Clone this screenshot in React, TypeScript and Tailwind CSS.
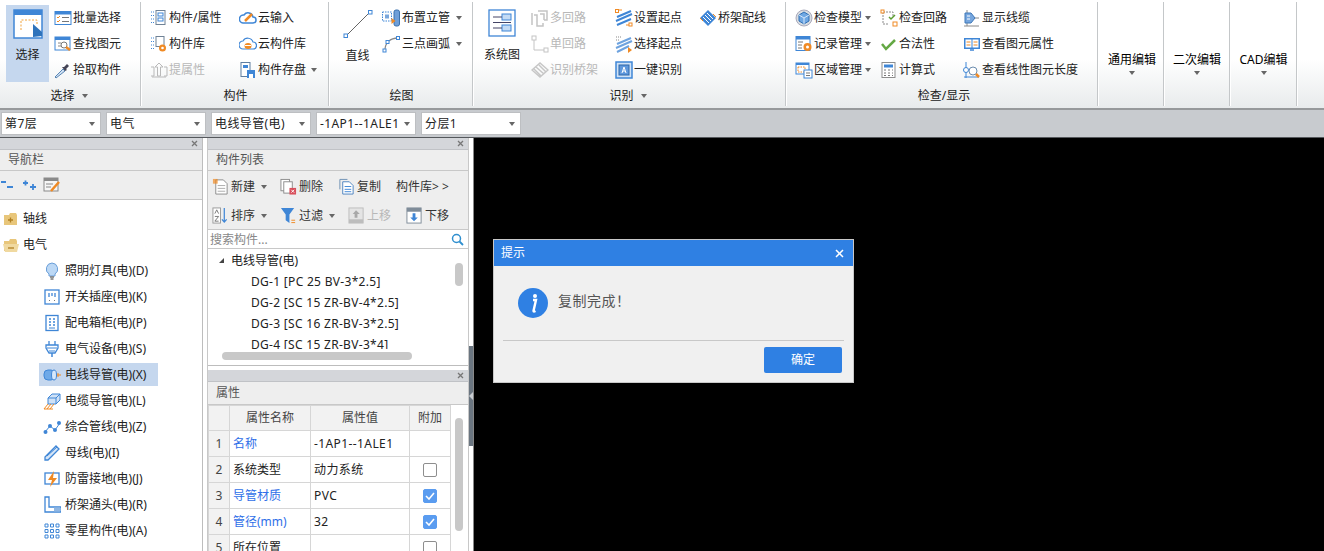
import React from "react";

const B = "#3f86d6";
const O = "#f08a24";
const G = "#b9b9b9";
const LB = "#c3dbf5";

const icons: Record<string, React.ReactNode> = {
  batch: (<><rect x="1" y="2.500" width="16" height="13" fill="#fff" stroke={B} /><rect x="1" y="2.500" width="16" height="3" fill={B} /><path d="M3 8l1 1 2-2M3 12l1 1 2-2" stroke={O} fill="none" /><path d="M8 8.500h7M8 12.500h7" stroke="#777" /></>),
  find: (<><rect x="1" y="2" width="15" height="13" fill="#fff" stroke={B} /><rect x="1" y="2" width="15" height="3" fill={B} /><circle cx="10" cy="10" r="3" fill="none" stroke="#777" /><path d="M4 8h3M4 11h3" stroke="#888" /><path d="M12 12l4 3" stroke={O} strokeWidth="2.500" /></>),
  pick: (<><path d="M2 17l-1-1 8-8 2 2z" fill="#cfe0f3" stroke="#5a87b5" /><path d="M10 6l3-3 2 2-3 3 1 1-2 1-3-4z" fill="#445" /></>),
  prop: (<><path d="M1 3h3M1 6.500h3M1 10h3M1 13.500h3" stroke={B} strokeDasharray="1 1" /><rect x="6" y="1.500" width="9" height="14" fill="#fff" stroke="#6f8296" /><rect x="8" y="4" width="5" height="3" fill="none" stroke={B} /><rect x="8" y="9" width="5" height="3" fill="none" stroke={B} /></>),
  cloudIn: (<><path d="M4 14a4 4 0 0 1 1-8 5 5 0 0 1 9 2 3 3 0 0 1 0 6z" fill="none" stroke={B} strokeWidth="1.500" /><path d="M6 12l7-7" stroke={O} strokeWidth="2.500" /></>),
  lib: (<><path d="M1 3h3M1 6.500h3M1 10h3M1 13.500h3" stroke={B} strokeDasharray="1 1" /><rect x="6" y="1.500" width="8" height="10" fill="#fff" stroke="#6f8296" /><circle cx="12.500" cy="13" r="3.500" fill={O} /><circle cx="12.500" cy="13" r="1.300" fill="#fff" /></>),
  cloudLib: (<><path d="M4 14a4 4 0 0 1 0-8 5.500 5.500 0 0 1 10 1 3.500 3.500 0 0 1 0 7z" fill="#fff" stroke={B} strokeWidth="1.200" /><ellipse cx="9" cy="11" rx="3.500" ry="3" fill={O} /><path d="M6 10.500h6" stroke="#fff" /></>),
  liftOff: (<><path d="M9 2l4 4h-2.500v9h-3V6H5z" fill="none" stroke={G} /><path d="M1 6h3v9H1M14 6h3v9h-3M2 16h14" stroke={G} fill="none" /></>),
  save: (<><rect x="2" y="1.500" width="9" height="14" fill="#fff" stroke="#5f7ea0" /><rect x="4" y="4" width="5" height="3" fill={B} /><rect x="8" y="9" width="8" height="8" fill={B} /><rect x="10" y="13" width="4" height="4" fill="#fff" /></>),
  riser: (<><rect x="0.500" y="3" width="9" height="9" fill="#fff" stroke={B} strokeDasharray="1.500 1" /><rect x="3" y="5.500" width="4" height="4" fill="#7aa7dc" /><rect x="12" y="1" width="5.500" height="16" rx="2" fill="#6d9ed8" stroke="#3b71ad" /><path d="M9.500 9l4 3-4 3z" fill={O} /></>),
  arc: (<><path d="M3 15C3 8 8 3 16 3" fill="none" stroke="#888" strokeWidth="1.300" /><rect x="1" y="14" width="3" height="3" fill="#fff" stroke={B} /><rect x="4" y="5.500" width="3" height="3" fill="#fff" stroke={B} /><rect x="14.500" y="1.500" width="3" height="3" fill="#fff" stroke={B} /></>),
  multi: (<path d="M7 2h9v9h-3M3 6h3v11h6v-3M9 5h4v6M1 4v12" fill="none" stroke="#c4c4c4" strokeWidth="1.500" />),
  single: (<><path d="M3 4v11h12" fill="none" stroke="#c4c4c4" /><rect x="1" y="1" width="4" height="4" fill="#fff" stroke="#c4c4c4" /><rect x="13" y="13" width="4" height="4" fill="#fff" stroke="#c4c4c4" /></>),
  tray: (<path d="M1 9l8-7 8 7-8 7zM5 6l8 7M8 4l7 7M3 8l7 7" fill="none" stroke="#c6c6c6" strokeWidth="1.500" />),
  setStart: (<><path d="M2 8L16 2M1 12L17 5M2 16L16 10" stroke={B} strokeWidth="2" /><rect x="0.500" y="0.500" width="3" height="3" fill="none" stroke={O} /><rect x="14" y="14" width="3" height="3" fill="none" stroke={O} /><path d="M4 1h3M11 16h3" stroke={O} /></>),
  chooseStart: (<><path d="M2 9L16 3M1 13L17 6M2 17L14 11" stroke="#6ea3df" strokeWidth="2" /><path d="M1 2h5M1 5h3" stroke="#888" strokeDasharray="1 1" /><path d="M13 12l4 3-4 3z" fill={O} /></>),
  oneKey: (<><rect x="1" y="1" width="16" height="16" fill="#cfe2f7" stroke={B} strokeWidth="1.500" /><rect x="4" y="4" width="10" height="10" fill="#5f98dc" stroke="#2f66a8" /><path d="M7 12l2-6 2 6M8 10h2" stroke="#fff" fill="none" /></>),
  trayWire: (<><path d="M1 9l8-8 8 8-8 8z" fill={B} /><path d="M4 8l6 6M6 6l6 6M8 4l6 6" stroke="#fff" /><path d="M1 9l3 3M14 5l3 3" stroke={O} /></>),
  model: (<><circle cx="9" cy="9" r="8" fill="#d8dde2" stroke="#aab" /><path d="M9 3l5 3v6l-5 3-5-3V6z" fill="#6ea7e3" stroke="#2f6fb5" /><path d="M4 6l5 3 5-3M9 9v6" stroke="#d4e6fa" fill="none" /></>),
  record: (<><rect x="1" y="1.500" width="14" height="14" fill="#fff" stroke={B} /><rect x="1" y="1.500" width="14" height="3" fill={B} /><path d="M3 7h5M3 10h4M3 13h4" stroke="#777" /><circle cx="12.500" cy="12" r="4" fill={O} /><circle cx="12.500" cy="12" r="1.500" fill="#fff" /></>),
  area: (<><rect x="1" y="2" width="13" height="11" fill="#fff" stroke={B} /><rect x="1" y="2" width="13" height="2" fill={B} /><rect x="3" y="6" width="7" height="5" fill="none" stroke={O} strokeDasharray="1.500 1" /><rect x="9" y="9" width="8" height="8" fill="#fff" stroke={B} /><path d="M11 12h4M11 14.500h4" stroke="#777" /></>),
  loop: (<><path d="M3 3h10v4M3 3v12h6" fill="none" stroke="#8a8a8a" strokeDasharray="2 1" /><rect x="1" y="1" width="3" height="3" fill="#fff" stroke={O} /><rect x="13" y="13" width="4" height="4" fill="#fff" stroke={O} /><path d="M9 8l2 2 4-4" fill="none" stroke="#5c9e31" strokeWidth="1.500" /></>),
  check: (<path d="M2 9l4 5 9-9" fill="none" stroke="#64a844" strokeWidth="2.500" />),
  calc: (<><rect x="2" y="1.500" width="13" height="15" fill="#fff" stroke="#8d8d8d" /><rect x="4" y="3.500" width="9" height="3" fill={B} /><path d="M4 9h2M8 9h2M12 9h1M4 12h2M8 12h2M12 12h1M4 14.500h2M8 14.500h2M12 14.500h1" stroke="#777" /></>),
  showWire: (<><path d="M4 1v16M1 17h15M11 9h5" stroke="#8a8a8a" /><path d="M2 4h6l4 5-4 5H2z" fill="#76a6de" stroke="#3f78b8" /><path d="M4 7h3M4 10h3" stroke="#fff" /></>),
  book: (<><path d="M1 3h16v11H1z" fill={B} /><rect x="2.500" y="4.500" width="6" height="8" fill="#fff" /><rect x="9.500" y="4.500" width="6" height="8" fill="#fff" /><path d="M3.500 7h4M3.500 10h4M10.500 7h4M10.500 10h4" stroke={O} /><path d="M7 15h4" stroke={B} strokeWidth="1.500" /></>),
  length: (<><path d="M3 1v16M1 16h15" stroke={B} /><circle cx="3" cy="9" r="2.500" fill="#fff" stroke={B} /><circle cx="10" cy="10" r="4" fill="#fff" stroke="#6b8cae" /><path d="M13 13l3 3" stroke={O} strokeWidth="2.500" /></>),
  bulb: (<><path d="M9 1a6 6 0 0 1 3 11v2H6v-2A6 6 0 0 1 9 1z" fill="#bcd8f5" stroke="#6a9ed8" /><path d="M7 15h4M7.500 17h3" stroke="#777" strokeWidth="1.300" /></>),
  socket: (<><rect x="2" y="2" width="14" height="14" fill="#fff" stroke={B} strokeWidth="1.300" /><path d="M6 5v4M9 5v3M12 5v4" stroke={B} strokeWidth="1.300" /><path d="M6 12l1 1M12 12l-1 1" stroke="#777" /></>),
  box: (<><rect x="3" y="1.500" width="12" height="15" fill="#fff" stroke={B} strokeWidth="1.300" /><path d="M6 5h2M10 5h2M6 8h2M10 8h2M6 11h2M10 11h2" stroke={B} strokeWidth="1.500" /><path d="M6 14h6" stroke={B} /></>),
  device: (<><path d="M6 1v4M12 1v4" stroke={B} strokeWidth="1.300" /><path d="M3 5h12v3l-3 5H6L3 8z" fill="#fff" stroke={B} strokeWidth="1.300" /><path d="M4 8h10M6 11h6" stroke={B} /><path d="M9 13v4" stroke={B} strokeWidth="1.500" /></>),
  conduit: (<><rect x="1" y="4" width="11" height="10" rx="4" fill="#6ea9e8" stroke={B} /><ellipse cx="11" cy="9" rx="2.500" ry="5" fill="#d6e8fb" stroke={B} /><path d="M14 9h4M15 7v4" stroke={O} /></>),
  cable: (<><path d="M5 6l4-4h8v6l-4 4H5z" fill="#cfe1f6" stroke={B} /><path d="M5 6h8v6M13 6l4-4" stroke={B} fill="none" /><path d="M1 17l4-5M4 17l4-5M7 17l4-5M1 17h9" stroke={O} fill="none" /></>),
  pipe: (<><path d="M2 14l5-6 5 4 5-7" fill="none" stroke={B} /><circle cx="2.500" cy="14" r="2" fill={B} /><circle cx="7" cy="8" r="2" fill={B} /><circle cx="12" cy="12" r="2" fill={B} /><circle cx="16" cy="5" r="2" fill={B} /></>),
  bus: (<><path d="M2 13L13 2l3 3L5 16H2z" fill="#d5e5f7" stroke={B} strokeWidth="1.300" /><path d="M4 12L14 3" stroke={B} /></>),
  ground: (<><rect x="2" y="3" width="14" height="11" fill="#fff" stroke={B} strokeWidth="1.300" /><path d="M11 1L5 10h4l-2 7 7-9h-4z" fill={O} /></>),
  tee: (<><path d="M2 1h4v10h12v5H2z" fill="#fff" stroke={B} strokeWidth="1.300" /><rect x="11" y="11.500" width="6" height="4" fill="#8fb6e2" /></>),
  grid: (<path d="M2 2h3v3H2zM7.500 2h3v3h-3zM13 2h3v3h-3zM2 7.500h3v3H2zM7.500 7.500h3v3h-3zM13 7.500h3v3h-3zM2 13h3v3H2zM7.500 13h3v3h-3zM13 13h3v3h-3z" fill="none" stroke={B} />),
  newItem: (<><path d="M4 2h8l4 4v11H4z" fill="#fff" stroke="#8b8b8b" /><path d="M6 8h8M6 11h8M6 14h8" stroke="#aaa" /><rect x="1" y="1" width="5" height="5" fill={O} fillOpacity="0.700" /></>),
  del: (<><rect x="1" y="1.500" width="9" height="12" fill="#fff" stroke="#8b8b8b" /><rect x="4" y="4" width="9" height="12" fill="#fff" stroke="#8b8b8b" /><rect x="10" y="10.500" width="7" height="7" fill="#d8505c" /><path d="M12 12.500l3 3M15 12.500l-3 3" stroke="#fff" /></>),
  copy: (<><path d="M2 12V1.500h8" fill="none" stroke="#6c8fb4" /><path d="M5 4h7l4 4v9H5z" fill="#fff" stroke="#4d83bf" /><path d="M7 9h7M7 12h7M7 14.500h7" stroke={B} /></>),
  sort: (<><rect x="1" y="1" width="8" height="16" fill="#fff" stroke="#999" /><path d="M3 7l2-4 2 4M3 10h4l-4 5h4" stroke="#777" fill="none" /><path d="M13 1v15M10.500 13l2.500 3 2.500-3" stroke={B} fill="none" strokeWidth="1.300" /></>),
  filter: (<><path d="M1 1h14L10 8v9L6 14V8z" fill={B} /><path d="M12 14h4M12 16.500h4" stroke={O} /></>),
  up: (<><rect x="1" y="1" width="15" height="16" fill="#e4e4e4" stroke="#bdbdbd" /><path d="M8.500 3.500l4 4h-2.500v4h-3v-4H5z" fill="#a8a8a8" /><rect x="1" y="13" width="15" height="4" fill="#bdbdbd" /></>),
  down: (<><rect x="1" y="1" width="15" height="16" fill="#fff" stroke="#7f8c99" /><rect x="1" y="1" width="15" height="4" fill="#7f8c99" /><path d="M8.500 15l4-4H10V6.500H7V11H4.500z" fill={B} /></>),
  edit: (<><rect x="1" y="2" width="14" height="13" fill="#f6f6f6" stroke="#8a8a8a" /><rect x="1" y="2" width="14" height="3" fill="#8a8a8a" /><path d="M3 8h7M3 11h5" stroke="#888" /><path d="M8 15l8-9" stroke={O} strokeWidth="2.500" /></>),
};

function Ic({ n, size = 18 }: { n: string; size?: number }) {
  return <svg width={size} height={size} viewBox="0 0 18 18" className="shrink-0">{icons[n]}</svg>;
}

function Caret({ className = "" }: { className?: string }) {
  return <span className={`inline-block w-0 h-0 border-x-[3.5px] border-x-transparent border-t-[4px] border-t-[#666] ${className}`} />;
}

type Tool = { icon: string; label: string; off?: boolean; caret?: number };

function ToolCol({ w, items, gap = 2 }: { w: number; items: Tool[]; gap?: number }) {
  return (
    <div className="flex flex-col shrink-0" style={{ width: w }}>
      {items.map((t) => (
        <div key={t.label} className="flex items-center h-[26px] whitespace-nowrap" style={{ gap }}>
          <Ic n={t.icon} />
          <span className={t.off ? "text-[#b8b8b8]" : "text-[#222]"}>{t.label}</span>
          {t.caret !== undefined && <span className="flex" style={{ marginLeft: t.caret }}><Caret /></span>}
        </div>
      ))}
    </div>
  );
}

function Group({ w, label, caret, children, labelClass = "pl-[2px]" }: { w: number; label: string; caret?: boolean; children: React.ReactNode; labelClass?: string }) {
  return (
    <div className="flex flex-col shrink-0 h-[104px] border-r border-[#c4c7c9] shadow-[1px_0_0_#fff]" style={{ width: w }}>
      <div className="flex h-[85px]">{children}</div>
      <div className={`flex items-center justify-center gap-[7px] text-[#222] ${labelClass}`}>
        {label}
        {caret && <Caret />}
      </div>
    </div>
  );
}

function EditGroup({ w, label, cls }: { w: number; label: string; cls: string }) {
  return (
    <div className={`flex flex-col items-center pt-[49px] h-[104px] shrink-0 border-r border-[#c4c7c9] shadow-[1px_0_0_#fff] ${cls}`} style={{ width: w }}>
      <span className="leading-[18px]">{label}</span>
      <Caret className="mt-[2px]" />
    </div>
  );
}

function Ribbon() {
  return (
    <div className="flex h-[110px] pt-[2px] border-b-2 border-[#96999b] bg-gradient-to-b from-white from-[55%] to-[#e8ebec]">
      <Group w={141} label="选择" caret labelClass="pr-[2px]">
        <div className="flex flex-col items-center ml-[6px] mt-[3px] w-[43px] h-[77px] bg-[#c5d7ee] pt-[4px]">
          <svg width="30" height="30" viewBox="0 0 30 30"><rect x="1" y="1" width="28" height="28" fill="#fff" stroke={B} strokeWidth="1.500" /><rect x="1" y="1" width="28" height="5" fill={B} /><path d="M8 21V11h16v5" fill="none" stroke="#f2a33a" strokeDasharray="2 1.500" /><path d="M20 15v13l9-1v-4z" fill="#2f73bb" /></svg>
          <span className="mt-[7px] text-[#222]">选择</span>
        </div>
        <div className="ml-[5px] mt-[3px]">
          <ToolCol w={86} gap={1} items={[{ icon: "batch", label: "批量选择" }, { icon: "find", label: "查找图元" }, { icon: "pick", label: "拾取构件" }]} />
        </div>
      </Group>
      <Group w={188} label="构件">
        <div className="flex pl-[9px] mt-[3px]">
          <ToolCol w={89} gap={1} items={[{ icon: "prop", label: "构件/属性" }, { icon: "lib", label: "构件库" }, { icon: "liftOff", label: "提属性", off: true }]} />
          <ToolCol w={88} gap={1} items={[{ icon: "cloudIn", label: "云输入" }, { icon: "cloudLib", label: "云构件库" }, { icon: "save", label: "构件存盘", caret: 4 }]} />
        </div>
      </Group>
      <Group w={144} label="绘图">
        <div className="flex flex-col items-center w-[53px] pl-[4px] pt-[7px]">
          <svg width="30" height="30" viewBox="0 0 30 30"><path d="M3 27L27 3" stroke="#666" /><rect x="1" y="25" width="3.500" height="3.500" fill="#fff" stroke={B} /><rect x="25.500" y="1.500" width="3.500" height="3.500" fill="#fff" stroke={B} /></svg>
          <span className="mt-[8px] text-[#222]">直线</span>
        </div>
        <div className="mt-[3px]">
          <ToolCol w={90} gap={2} items={[{ icon: "riser", label: "布置立管", caret: 4 }, { icon: "arc", label: "三点画弧", caret: 4 }]} />
        </div>
      </Group>
      <Group w={313} label="识别" caret labelClass="pr-[2px]">
        <div className="flex flex-col items-center w-[58px] pt-[7px]">
          <svg width="28" height="28" viewBox="0 0 28 28"><rect x="1" y="1" width="26" height="26" fill="#fff" stroke={B} strokeWidth="1.300" /><rect x="14" y="5" width="9" height="6" fill={LB} stroke={B} /><rect x="14" y="16" width="9" height="6" fill={LB} stroke={B} /><path d="M5 8h9M5 19h9M5 13.500h18" stroke="#446" /></svg>
          <span className="mt-[9px] text-[#222]">系统图</span>
        </div>
        <div className="flex mt-[3px]">
          <ToolCol w={84} gap={1} items={[{ icon: "multi", label: "多回路", off: true }, { icon: "single", label: "单回路", off: true }, { icon: "tray", label: "识别桥架", off: true }]} />
          <ToolCol w={84} gap={1} items={[{ icon: "setStart", label: "设置起点" }, { icon: "chooseStart", label: "选择起点" }, { icon: "oneKey", label: "一键识别" }]} />
          <ToolCol w={80} gap={1} items={[{ icon: "trayWire", label: "桥架配线" }]} />
        </div>
      </Group>
      <Group w={312} label="检查/显示" labelClass="pl-[5px]">
        <div className="flex pl-[9px] mt-[3px]">
          <ToolCol w={85} gap={1} items={[{ icon: "model", label: "检查模型", caret: 2 }, { icon: "record", label: "记录管理", caret: 2 }, { icon: "area", label: "区域管理", caret: 2 }]} />
          <ToolCol w={83} gap={1} items={[{ icon: "loop", label: "检查回路" }, { icon: "check", label: "合法性" }, { icon: "calc", label: "计算式" }]} />
          <ToolCol w={120} gap={1} items={[{ icon: "showWire", label: "显示线缆" }, { icon: "book", label: "查看图元属性" }, { icon: "length", label: "查看线性图元长度" }]} />
        </div>
      </Group>
      <EditGroup w={66} label="通用编辑" cls="pl-[3px]" />
      <EditGroup w={66} label="二次编辑" cls="pl-[1px]" />
      <EditGroup w={67} label="CAD编辑" cls="pl-[1px]" />
    </div>
  );
}

function Combo({ text }: { text: string }) {
  return (
    <div className="flex items-center justify-between w-[100px] h-[23px] pl-[3px] pr-[5px] bg-white border border-[#bdbfc2] text-[#222] tracking-[0.4px]">
      {text}
      <Caret />
    </div>
  );
}

function PanelHead({ title, h = 21 }: { title: string; h?: number }) {
  return (
    <>
      <div className="flex shrink-0 items-center justify-end h-[12px] pr-[4px] bg-[#d4d6da] border-b border-[#c0c2c6]">
        <svg width="7" height="7" viewBox="0 0 7 7"><path d="M1 1l5 5M6 1L1 6" stroke="#777" strokeWidth="1.300" /></svg>
      </div>
      <div className="flex shrink-0 items-center pl-[8px] bg-[#eeeeee] border-b border-[#c8c8c8] text-[#555]" style={{ height: h }}>{title}</div>
    </>
  );
}

const navItems = [
  ["bulb", "照明灯具(电)(D)"],
  ["socket", "开关插座(电)(K)"],
  ["box", "配电箱柜(电)(P)"],
  ["device", "电气设备(电)(S)"],
  ["conduit", "电线导管(电)(X)"],
  ["cable", "电缆导管(电)(L)"],
  ["pipe", "综合管线(电)(Z)"],
  ["bus", "母线(电)(I)"],
  ["ground", "防雷接地(电)(J)"],
  ["tee", "桥架通头(电)(R)"],
  ["grid", "零星构件(电)(A)"],
];

function Folder({ open, mark }: { open?: boolean; mark: string }) {
  return (
    <svg width="17" height="15" viewBox="0 0 17 15" className="shrink-0">
      <path d="M1 3h5l1-2h6l1 2v10H1z" fill="#e8c67a" />
      {open && <path d="M0 6h16l-2 8H2z" fill="#f0d9a0" />}
      <path d={mark} stroke="#b07f22" strokeWidth="1.300" />
    </svg>
  );
}

function NavPanel() {
  return (
    <div className="flex flex-col w-[203px] shrink-0 border-r border-[#bdbdbd] bg-white overflow-hidden">
      <PanelHead title="导航栏" />
      <div className="flex shrink-0 items-center gap-[7px] h-[29px] bg-[#eeeeee] border-b border-[#c8c8c8]">
        <svg width="14" height="10" viewBox="0 0 14 10"><path d="M1 2h5M7 7h6" stroke={B} strokeWidth="2" /></svg>
        <svg width="14" height="10" viewBox="0 0 14 10" className="ml-[1px]"><path d="M1 3h5M3.500 .5v5M8 7h6M11 4v6" stroke={B} strokeWidth="1.800" /></svg>
        <Ic n="edit" />
      </div>
      <div className="pt-[6px]">
        <div className="flex items-center gap-[3px] h-[26px] pl-[3px]"><Folder mark="M5 8h5M7.500 5.500v5" /><span className="text-[#222]">轴线</span></div>
        <div className="flex items-center gap-[3px] h-[26px] pl-[3px]"><Folder open mark="M5 10h6" /><span className="text-[#222]">电气</span></div>
        {navItems.map(([icon, label]) => (
          <div key={label} className={`flex items-center h-[26px] ml-[39px] w-[119px] ${label.includes("(X)") ? "bg-[linear-gradient(#c5d7ee,#c5d7ee)] bg-no-repeat bg-[length:100%_23px] bg-[position:0_1px]" : ""}`}>
            <span className="flex items-center gap-[4px] pl-[4px] whitespace-nowrap text-[#222]"><Ic n={icon} />{label}</span>
          </div>
        ))}
        <div className="flex items-center gap-[4px] h-[26px] pl-[10px]"><Folder mark="M5 8h5M7.500 5.500v5" /></div>
      </div>
    </div>
  );
}

function ListTool({ icon, label, off, caret, cls = "" }: { icon: string; label: string; off?: boolean; caret?: boolean; cls?: string }) {
  return (
    <div className={`flex items-center gap-[2px] whitespace-nowrap ${off ? "text-[#b8b8b8]" : "text-[#333]"} ${cls}`}>
      <Ic n={icon} size={17} />
      {label}
      {caret && <Caret className="ml-[4px]" />}
    </div>
  );
}

const parts = ["DG-1 [PC 25 BV-3*2.5]", "DG-2 [SC 15 ZR-BV-4*2.5]", "DG-3 [SC 16 ZR-BV-3*2.5]", "DG-4 [SC 15 ZR-BV-3*4]"];

function ListPanel() {
  return (
    <div className="flex flex-col shrink-0 h-[228px] bg-white border-b border-[#bdbdbd] overflow-hidden">
      <PanelHead title="构件列表" />
      <div className="shrink-0 bg-[#eeeeee] border-b border-[#c8c8c8] h-[59px] pl-[4px] pt-[1px]">
        <div className="flex items-center h-[29px]">
          <ListTool icon="newItem" label="新建" caret cls="w-[68px]" />
          <ListTool icon="del" label="删除" cls="w-[58px]" />
          <ListTool icon="copy" label="复制" cls="w-[58px]" />
          <span className="text-[#333] whitespace-nowrap">构件库&gt; &gt;</span>
        </div>
        <div className="flex items-center h-[29px]">
          <ListTool icon="sort" label="排序" caret cls="w-[68px]" />
          <ListTool icon="filter" label="过滤" caret cls="w-[68px]" />
          <ListTool icon="up" label="上移" off cls="w-[58px]" />
          <ListTool icon="down" label="下移" />
        </div>
      </div>
      <div className="flex shrink-0 items-center justify-between h-[19px] pl-[2px] pr-[4px] pt-[2px] border-b border-[#c8c8c8] text-[#888]">
        搜索构件...
        <svg width="13" height="13" viewBox="0 0 13 13" className="-mt-[2px]"><circle cx="5.500" cy="5.500" r="4" fill="none" stroke="#2f8fcf" strokeWidth="1.500" /><path d="M8.500 8.500l3.500 3.500" stroke="#2f8fcf" strokeWidth="1.800" /></svg>
      </div>
      <div className="relative flex-1 overflow-hidden pt-[1px]">
        <div className="flex items-center h-[21px] pl-[11px] gap-[7px] text-[#222]">
          <span className="w-0 h-0 border-l-[5px] border-l-transparent border-b-[5px] border-b-[#444]" />
          电线导管(电)
        </div>
        <div className="h-[78px] overflow-hidden">
          {parts.map((p) => (
            <div key={p} className="flex items-center h-[21px] pl-[43px] whitespace-nowrap text-[#222] tracking-[0.3px]">{p}</div>
          ))}
        </div>
        <div className="absolute right-[5px] top-[14px] w-[8px] h-[23px] rounded bg-[#c8c8c8]" />
        <div className="absolute left-[14px] top-[103px] w-[190px] h-[8px] rounded bg-[#c8c8c8]" />
      </div>
    </div>
  );
}

const props = [
  ["1", "名称", "-1AP1--1ALE1", null, true],
  ["2", "系统类型", "动力系统", false, false],
  ["3", "导管材质", "PVC", true, true],
  ["4", "管径(mm)", "32", true, true],
  ["5", "所在位置", "", false, false],
] as const;

function PropPanel() {
  return (
    <div className="relative mt-[4px] flex-1 flex flex-col bg-white overflow-hidden">
      <PanelHead title="属性" h={23} />
      <table className="table-fixed w-[243px] border-collapse">
        <colgroup><col className="w-[21px]" /><col className="w-[81px]" /><col className="w-[99px]" /><col className="w-[41px]" /></colgroup>
        <thead>
          <tr className="h-[25px] bg-[#f2f2f2] text-[#444]">
            <th className="border border-[#d6d6d6] font-normal" />
            <th className="border border-[#d6d6d6] font-normal">属性名称</th>
            <th className="border border-[#d6d6d6] font-normal">属性值</th>
            <th className="border border-[#d6d6d6] font-normal">附加</th>
          </tr>
        </thead>
        <tbody>
          {props.map(([n, name, val, chk, blue]) => (
            <tr key={n} className="h-[26px]">
              <td className="border border-[#d6d6d6] bg-[#f2f2f2] text-center text-[#444]">{n}</td>
              <td className={`border border-[#d6d6d6] pl-[3px] ${blue ? "text-[#2f6fe8]" : "text-[#222]"}`}>{name}</td>
              <td className="border border-[#d6d6d6] pl-[3px] text-[#222] tracking-[0.4px]">{val}</td>
              <td className="border border-[#d6d6d6]">
                {chk !== null && (
                  <div className={`mx-auto flex items-center justify-center w-[14px] h-[14px] rounded-[2px] border ${chk ? "bg-[#5a9cf0] border-[#5a9cf0]" : "bg-white border-[#8e8e8e]"}`}>
                    {chk && <svg width="10" height="8" viewBox="0 0 10 8"><path d="M1 4l3 3 5-6" fill="none" stroke="#fff" strokeWidth="1.600" /></svg>}
                  </div>
                )}
              </td>
            </tr>
          ))}
        </tbody>
      </table>
      <div className="absolute right-[5px] top-[48px] w-[8px] h-[113px] rounded bg-[#c8c8c8]" />
    </div>
  );
}

function Dialog() {
  return (
    <div className="absolute left-[493px] top-[101px] w-[361px] h-[144px] bg-[#f0f0f0] border border-[#c8c8c8] flex flex-col">
      <div className="flex items-center justify-between h-[26px] pl-[7px] pr-[9px] bg-[#2f80e3] text-white">
        提示
        <svg width="9" height="9" viewBox="0 0 9 9"><path d="M1 1l7 7M8 1L1 8" stroke="#fff" strokeWidth="1.500" /></svg>
      </div>
      <div className="flex items-center gap-[10px] h-[74px] pl-[24px] pb-[1px]">
        <svg width="30" height="30" viewBox="0 0 30 30"><circle cx="15" cy="15" r="15" fill="#2f80e3" /><circle cx="17" cy="8" r="2" fill="#fff" /><path d="M15 12h3l-2.500 11q0 1 2 0" fill="none" stroke="#fff" strokeWidth="2.400" /></svg>
        <span className="text-[#555] text-[14px] tracking-[0.5px] -mt-[4px]">复制完成！</span>
      </div>
      <div className="mx-[9px] border-t border-[#c8c8c8]" />
      <div className="flex justify-end pt-[6px] pr-[11px]">
        <button className="w-[78px] h-[26px] rounded-[2px] bg-[#2f80e3] text-white">确定</button>
      </div>
    </div>
  );
}

export default function App() {
  return (
    <div className="w-[1324px] h-[551px] overflow-hidden bg-white text-[12px] [font-family:'Noto_Sans','Noto_Sans_CJK_SC',sans-serif]">
      <Ribbon />
      <div className="flex gap-[5px] items-center h-[28px] pl-[1px] bg-[#c8cbcf] border-b border-[#55585c]">
        {["第7层", "电气", "电线导管(电)", "-1AP1--1ALE1", "分层1"].map((c) => <Combo key={c} text={c} />)}
      </div>
      <div className="relative flex h-[413px]">
        <NavPanel />
        <div className="flex flex-col w-[262px] ml-[4px] shrink-0 border-x border-[#c8c8c8]">
          <ListPanel />
          <PropPanel />
        </div>
        <div className="w-[5px] shrink-0 bg-white border-r border-[#888]">
          <div className="relative mt-[208px] h-[100px] w-[4px] bg-[#6a7580]">
            <span className="absolute left-0 top-[46px] w-0 h-0 border-y-[4px] border-y-transparent border-r-[4px] border-r-[#c8ccd0]" />
          </div>
        </div>
        <div className="flex-1 bg-black" />
        <Dialog />
      </div>
    </div>
  );
}
